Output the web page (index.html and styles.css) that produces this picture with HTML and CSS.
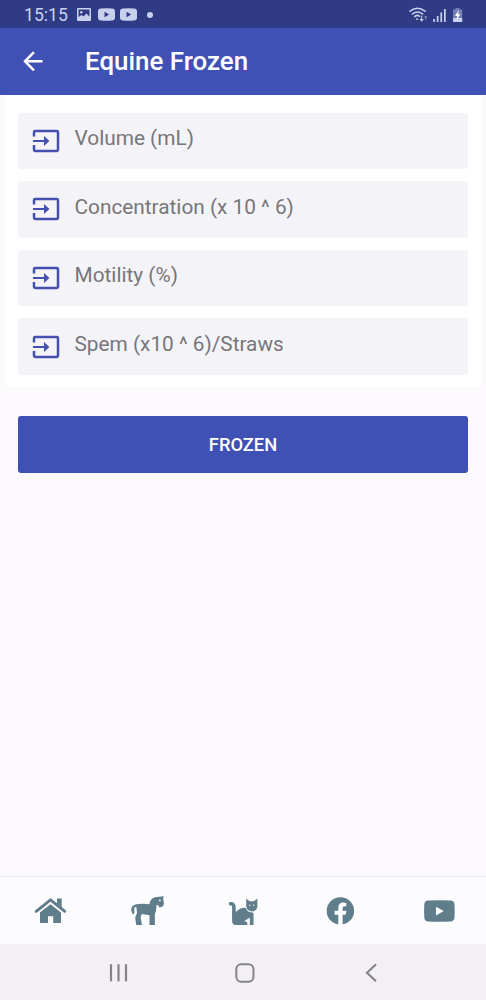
FILE: index.html
```html
<!DOCTYPE html>
<html lang="en">
<head>
<meta charset="utf-8">
<meta name="viewport" content="width=device-width, initial-scale=1">
<title>Equine Frozen</title>
<link rel="stylesheet" href="styles.css">
</head>
<body>
<svg class="defs" width="0" height="0" aria-hidden="true">
  <symbol id="input" viewBox="0 0 28 24">
    <path d="M2 7.500V3.200Q2 2 3.200 2H24.800Q26 2 26 3.200V20.800Q26 22 24.800 22H3.200Q2 22 2 20.800V16" fill="none" stroke="currentColor" stroke-width="2.500"/>
    <path d="M1 10.900H12V7L17.400 12L12 17V13.100H1Z" fill="currentColor"/>
  </symbol>
  <symbol id="video" viewBox="0 0 17 13">
    <path fill-rule="evenodd" d="M3 .5Q8.500 0 14 .5Q17 .5 17 3.500V9.500Q17 12.500 14 12.500Q8.500 13 3 12.500Q0 12.500 0 9.500V3.500Q0 .5 3 .5ZM6.500 3.800V9.200L11.200 6.500Z" fill="currentColor"/>
  </symbol>
</svg>
<div class="screen">
  <div class="status">
    <span class="clock">15:15</span>
    <svg class="picture" viewBox="0 0 14 13"><path fill-rule="evenodd" d="M1 0H13Q14 0 14 1V12Q14 13 13 13H1Q0 13 0 12V1Q0 0 1 0ZM1.500 1.500V9L4.500 7L6.500 8.500L9.500 5.500L12.500 8.500V1.500Z" fill="currentColor"/><circle cx="4.300" cy="4.300" r="1.200" fill="currentColor"/></svg>
    <svg class="video"><use href="#video"/></svg>
    <svg class="video"><use href="#video"/></svg>
    <span class="dot"></span>
    <svg class="signals" viewBox="408 5 58 18">
      <g fill="none" stroke="currentColor" stroke-width="1.500" stroke-linecap="round">
        <path d="M410 10.200Q417.500 4.200 425 10.200M412.300 13Q417.500 8.800 422.700 13M414.600 15.600Q417.500 13.400 419.500 15.200"/>
      </g>
      <path d="M416 17.500H418.200V18.800H416ZM421.200 14.500H422.200V18H423.800L421.700 20.800L419.500 18H421.200Z" fill="currentColor"/>
      <path d="M425.700 19V15.500M424.500 16.700L425.700 15L426.900 16.700" stroke="currentColor" stroke-width=".8" fill="none" opacity=".6"/>
      <path d="M433.200 18H434.900V21H433.200ZM436.800 15H438.500V21H436.800ZM440.400 11.500H442.100V21H440.400ZM444 8H445.700V21H444Z" fill="currentColor"/>
      <path d="M455.500 7H459.500V8.500H462.200V21H453V8.500H455.500Z" fill="currentColor" opacity=".45"/>
      <path d="M453 17H462.200V20.500Q462.200 21 461.700 21H453.500Q453 21 453 20.500Z" fill="currentColor"/>
      <path d="M458.800 9L455 15H457.200L456.500 19L460.400 13.300H458.200Z" fill="#fff"/>
    </svg>
  </div>
  <header class="appbar">
    <svg class="back" viewBox="0 0 20 20"><path d="M19.500 10.300H2M11 1.200L2 10.300L11 19.400" fill="none" stroke="#fff" stroke-width="2.500"/></svg>
    <h1 class="title">Equine Frozen</h1>
  </header>
  <main class="content">
    <div class="card">
      <div class="field"><svg class="field-icon"><use href="#input"/></svg><span class="label">Volume (mL)</span></div>
      <div class="field"><svg class="field-icon"><use href="#input"/></svg><span class="label">Concentration (x 10 ^ 6)</span></div>
      <div class="field"><svg class="field-icon"><use href="#input"/></svg><span class="label">Motility (%)</span></div>
      <div class="field"><svg class="field-icon"><use href="#input"/></svg><span class="label">Spem (x10 ^ 6)/Straws</span></div>
    </div>
    <button class="submit" type="button">FROZEN</button>
  </main>
  <nav class="tabs">
    <svg viewBox="32 893 36 36">
      <path d="M36.200 911.300L50.500 899.800L64.800 911.300" fill="none" stroke="currentColor" stroke-width="2.900" stroke-linecap="round" stroke-linejoin="round"/>
      <path d="M57 898.500H61.700V907.500L57 903.800ZM50.500 904.200L61 912.500V923H53.200V916.200H48V923H40V912.500Z" fill="currentColor"/>
    </svg>
    <svg viewBox="129 893 36 36">
      <path fill-rule="evenodd" d="M149.500 904.200C150 899.500 153.500 897 157 897L163.700 896.200L163.200 899L164 903.500L162.800 906.500L159.500 907.500L158.300 905.300L156.500 905L156 911L154.900 914V925H149.500V915.200L141.800 914L140.600 917L142 925H136.200L135.200 917.500L137 913L136.400 907.200Q134.300 906.600 134.300 909.500V912.500Q134.300 914.600 132.600 914L131.200 910.500Q131 905 136.500 904.200Q142 903.400 149.500 904.200ZM159 900.500A.9 .9 0 1 0 160.800 900.500A.9 .9 0 1 0 159 900.500Z" fill="currentColor"/>
    </svg>
    <svg viewBox="226 893 36 36">
      <path d="M230.600 903.800Q233.900 903.500 233.900 907V914" fill="none" stroke="currentColor" stroke-width="3.600" stroke-linecap="round"/>
      <path d="M232.100 912.500Q234.700 913.500 237.500 910.500Q241 907 245.800 908Q247.300 912.400 253.500 912.800V925H249.800V917.500L243.800 921.600H246Q247.500 922 247.500 925H236Q232.100 925 232.100 921Z" fill="currentColor"/>
      <path fill-rule="evenodd" d="M246.200 898.500L249.500 901.200H254L257.400 898.500V906.300Q257 910.800 251.800 911.500Q246.600 910.800 246.200 906.300ZM249.100 905.200A.7 .7 0 1 0 250.500 905.200A.7 .7 0 1 0 249.100 905.200ZM253.100 905.200A.7 .7 0 1 0 254.500 905.200A.7 .7 0 1 0 253.100 905.200Z" fill="currentColor"/>
    </svg>
    <svg viewBox="323 893 36 36">
      <circle cx="340.400" cy="910.900" r="13.700" fill="currentColor"/>
      <path d="M338.300 925V914.800H334.600V910.700H338.300V907.800C338.300 904.300 340.400 902.600 343.500 902.600L346.300 902.900V906.300H344.500Q342.600 906.300 342.600 908.300V910.700H346.400L345.700 914.800H342.600V925Z" fill="#fcfbfd"/>
    </svg>
    <svg viewBox="420 893 36 36">
      <path fill-rule="evenodd" d="M428 900.600Q439.200 899.800 450.500 900.600Q454.200 900.800 454.500 904.500Q454.900 911 454.500 917.500Q454.200 921.200 450.500 921.500Q439.200 922.200 428 921.500Q424.600 921.200 424.300 917.500Q423.800 911 424.300 904.500Q424.600 900.800 428 900.600ZM436 906.700V915.500L443.800 911.100Z" fill="currentColor"/>
    </svg>
  </nav>
  <div class="system">
    <svg viewBox="0 0 22 22"><path d="M3 2.200V19.200M10.500 2.200V19.200M18 2.200V19.200" stroke="currentColor" stroke-width="2.200"/></svg>
    <svg viewBox="0 0 22 22"><rect x="1.300" y="2.300" width="17.200" height="17.400" rx="5" fill="none" stroke="currentColor" stroke-width="2"/></svg>
    <svg viewBox="0 0 22 22"><path d="M15 2.200L6 10.700L15 19.200" fill="none" stroke="currentColor" stroke-width="2.100"/></svg>
  </div>
</div>
</body>
</html>
```
FILE: styles.css
```css
* { box-sizing: border-box; }
body { margin: 0; font-family: Roboto, "Liberation Sans", sans-serif; }
.defs { position: absolute; }
.screen { width: 486px; height: 1000px; display: flex; flex-direction: column; background: #fbf9fc; overflow: hidden; }
.status { height: 28px; flex: none; display: flex; align-items: center; padding: 1px 20px 0 24px; background: #2f3c85; color: #c9d0ee; }
.clock { width: 53px; font-size: 17.600px; line-height: 20px; }
.picture { width: 14px; height: 13px; margin-right: 7px; }
.video { width: 17px; height: 13px; margin-right: 5px; }
.dot { width: 6px; height: 6px; margin-left: 5px; border-radius: 50%; background: currentColor; }
.signals { width: 58px; height: 18px; margin-left: auto; }
.appbar { height: 66.500px; flex: none; display: flex; align-items: center; padding-left: 23px; background: #4051b5; color: #fff; }
.back { width: 20px; height: 20px; margin-right: 42px; }
.title { margin: 0; font-size: 25.900px; line-height: 32px; font-weight: 500; }
.content { flex: 1; display: flex; flex-direction: column; }
.card { height: 291.500px; margin: 0 5px; padding: 18px 13px 0; display: flex; flex-direction: column; gap: 12px; background: #fff; }
.field { height: 56.600px; flex: none; display: flex; align-items: center; padding-left: 14px; border-radius: 4px; background: #f4f3f7; }
.field-icon { width: 28px; height: 24px; color: #4450b0; margin-right: 14.500px; }
.label { padding-bottom: 5px; font-size: 20.800px; line-height: 26px; color: #77767b; white-space: nowrap; }
.submit { height: 57px; margin: 30px 18px 0; padding: 0; border: 0; border-radius: 3px; background: #4051b5; color: #fff; font: 500 18.300px/24px Roboto, "Liberation Sans", sans-serif; }
.tabs { height: 68px; flex: none; display: flex; gap: 61px; padding: 16px 0 0 32px; border-top: 1px solid #e9e7eb; background: #fcfbfd; color: #607d8b; }
.tabs svg { width: 36px; height: 36px; flex: none; }
.system { height: 56px; flex: none; display: flex; gap: 104.500px; padding: 18px 0 0 108px; background: #f2f0f3; color: #858387; }
.system svg { width: 22px; height: 22px; flex: none; }
```
